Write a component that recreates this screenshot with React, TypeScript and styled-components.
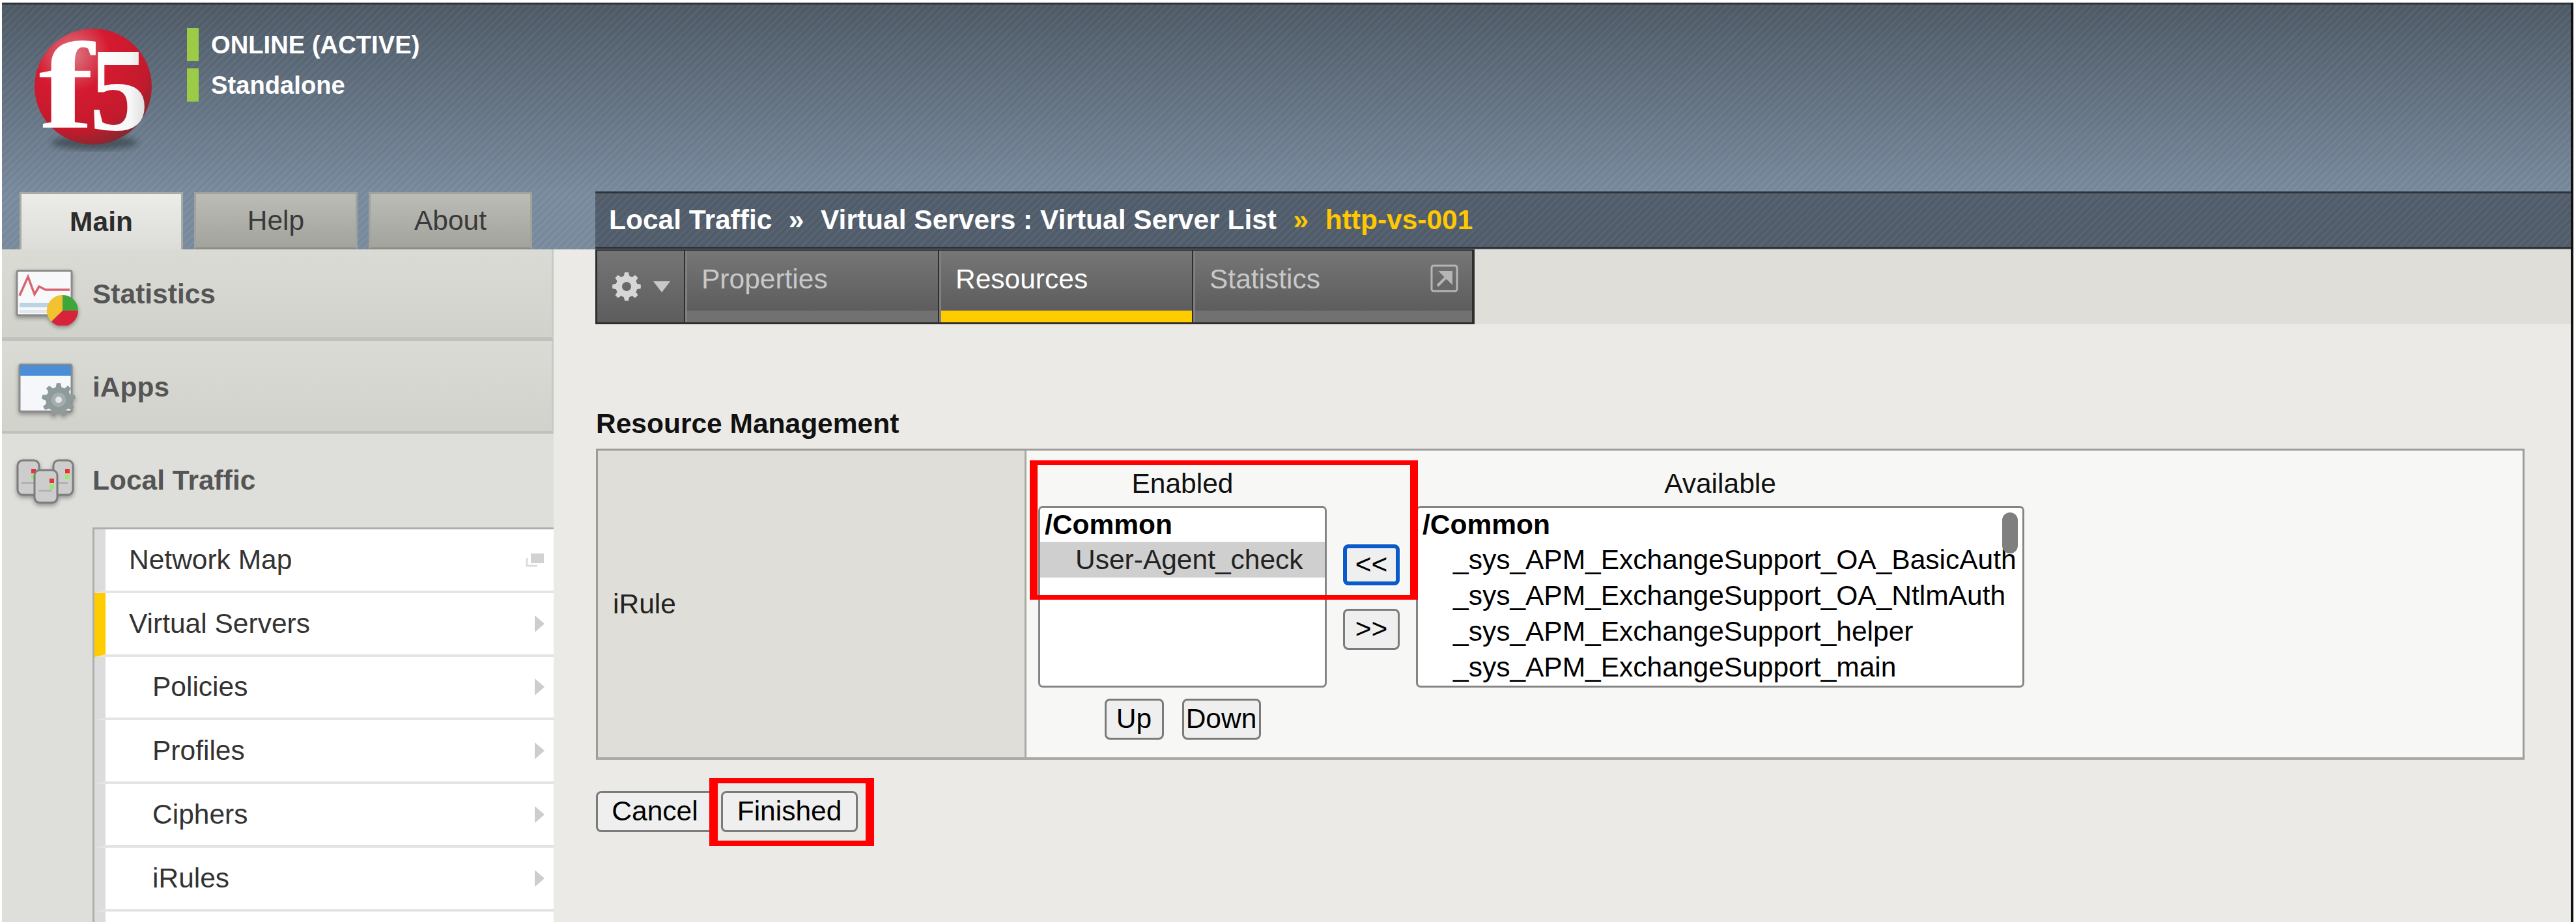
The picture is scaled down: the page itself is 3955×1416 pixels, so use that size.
import React from 'react'
import styled, { createGlobalStyle } from 'styled-components'

const GlobalStyle = createGlobalStyle`
  html, body {
    margin: 0;
    background: #fff;
    overflow: hidden;
  }
  body {
    font-family: "Liberation Sans", Arial, sans-serif;
    font-size: 42.5px;
    color: #000;
  }
  * {
    box-sizing: border-box;
  }
`

const stripes = `repeating-linear-gradient(135deg, rgba(255, 255, 255, 0.035) 0 3px, rgba(0, 0, 0, 0.02) 3px 8px)`

const Frame = styled.div`
  margin: 4px 0 0 3px;
  width: 3948px;
  height: 1412px;
  border-right: 4px solid #111;
  overflow: hidden;
  display: flex;
  flex-direction: column;
`

const Header = styled.header`
  height: 379px;
  flex: none;
  border-top: 3px solid #2f3337;
  background: ${stripes}, linear-gradient(180deg, #4f5b67 0%, #6a7a8b 50%, #7a8c9f 78%, #7a8c9f 100%);
  display: flex;
  flex-direction: column;
  justify-content: space-between;
`

const Brand = styled.div`
  display: flex;
  padding: 36px 0 0 50px;
`

const Logo = styled.svg`
  width: 180px;
  height: 192px;
  flex: none;
  overflow: visible;
  filter: blur(0.6px);
`

const StatusList = styled.div`
  margin-left: 54px;
  display: flex;
  flex-direction: column;
  gap: 11px;
`

const StatusLine = styled.div`
  height: 51px;
  border-left: 18px solid #9ccc47;
  padding-left: 19px;
  display: flex;
  align-items: center;
  font-size: 38.2px;
  font-weight: 700;
  color: #fff;
`

const HeaderBottom = styled.div`
  display: flex;
  align-items: flex-end;
  padding-left: 27px;
`

const TopTabs = styled.div`
  width: 884px;
  flex: none;
  display: flex;
  gap: 17px;
`

const TopTab = styled.div<{ $active?: boolean }>`
  width: 251px;
  height: 88px;
  display: flex;
  align-items: center;
  justify-content: center;
  border: 3px solid ${p => (p.$active ? '#a9a9a5' : '#a2a29d')};
  border-bottom: ${p => (p.$active ? 'none' : '3px solid #8c8c87')};
  background: ${p =>
    p.$active
      ? 'linear-gradient(180deg, #ecece8, #dcdcd8)'
      : 'linear-gradient(180deg, #bcbcb6, #a3a39d)'};
  font-weight: ${p => (p.$active ? 700 : 400)};
  color: ${p => (p.$active ? '#2c2c2c' : '#3a3a3a')};
`

const Breadcrumb = styled.div`
  flex: 1;
  height: 88px;
  margin-bottom: 1px;
  border-top: 3px solid #2f3337;
  border-bottom: 3px solid #2f3337;
  padding-left: 21px;
  display: flex;
  align-items: center;
  gap: 25.5px;
  background: ${stripes}, #525e6c;
  font-weight: 700;
  color: #fff;
`

const Crumb = styled.span<{ $current?: boolean }>`
  color: ${p => (p.$current ? '#ffc800' : '#fff')};
`

const Body = styled.div`
  flex: 1;
  min-height: 0;
  display: flex;
`

const Sidebar = styled.aside`
  width: 847px;
  flex: none;
  background: #dededa;
`

const Panel = styled.div<{ $h: number; $line: number }>`
  height: ${p => p.$h}px;
  border-bottom: ${p => p.$line}px solid #c0c0bc;
  border-right: 3px solid #c9c9c5;
  background: linear-gradient(180deg, #dbdbd6, #d2d2cd);
  padding: 3px 0 0 19px;
  display: flex;
  align-items: center;
`

const OpenPanel = styled(Panel)`
  border-bottom: none;
  border-right: none;
  padding-top: 0;
  background: #dededa;
`

const PanelIcon = styled.svg`
  width: 100px;
  height: 96px;
  margin-right: 20px;
  flex: none;
  filter: drop-shadow(0 3px 3px rgba(0, 0, 0, 0.35)) blur(0.5px);
`

const PanelLabel = styled.span`
  font-weight: 700;
  color: #555;
`

const Menu = styled.div`
  margin-left: 139px;
  border-top: 3px solid #aeaeaa;
  border-left: 3px solid #aeaeaa;
`

const MenuRow = styled.div<{ $current?: boolean; $sub?: boolean }>`
  height: 97.8px;
  display: flex;
  align-items: center;
  justify-content: space-between;
  padding: 0 14px 0 ${p => (p.$sub ? 72 : 36)}px;
  background: #fff;
  border-left: 17px solid ${p => (p.$current ? '#ffcc00' : '#dcdcdc')};
  border-bottom: 4px solid #e4e4e4;
  color: #333;
`

const RowArrow = styled.svg`
  width: 15px;
  height: 26px;
  flex: none;
`

const Main = styled.main`
  flex: 1;
  min-width: 0;
  background: #ebeae6;
`

const TabStrip = styled.div`
  height: 115px;
  margin-left: 64px;
  display: flex;
`

const TabBar = styled.div`
  display: flex;
  gap: 2px;
  padding: 2px 4px 3px 3px;
  background: #2e2e2e;
`

const TabFiller = styled.div`
  flex: 1;
  background: #dfded9;
`

const GearCell = styled.div`
  width: 133px;
  display: flex;
  align-items: center;
  justify-content: center;
  gap: 18px;
  background: linear-gradient(180deg, #757575, #5d5d5d);
`

const GearMenuIcon = styled.svg`
  width: 46px;
  height: 46px;
`

const CaretDown = styled.svg`
  width: 26px;
  height: 17px;
`

const TabCell = styled.div<{ $w: number }>`
  width: ${p => p.$w}px;
  display: flex;
  flex-direction: column;
  border-left: 3px solid #808080;
`

const TabFace = styled.div<{ $active?: boolean }>`
  flex: 1;
  display: flex;
  align-items: center;
  justify-content: space-between;
  padding: 0 21px 4px 22px;
  background: linear-gradient(180deg, #767676, #5d5d5d);
  color: ${p => (p.$active ? '#fff' : '#c8c8c8')};
`

const TabFoot = styled.div<{ $active?: boolean }>`
  height: 18px;
  background: ${p => (p.$active ? '#ffcc00' : '#717171')};
`

const ExportIcon = styled.svg`
  width: 43px;
  height: 43px;
  margin-top: -3px;
`

const Content = styled.div`
  padding: 129px 71px 0 65px;
`

const SectionTitle = styled.h2`
  margin: 0 0 14px;
  font-size: 42.5px;
  line-height: 48px;
  font-weight: 700;
  color: #111;
`

const ResourceTable = styled.div`
  height: 478px;
  display: flex;
  border: 3px solid #9c9c98;
  border-bottom: 4px solid #aaaaa6;
`

const LabelCell = styled.div`
  width: 658px;
  flex: none;
  display: flex;
  align-items: center;
  padding-left: 23px;
  background: #dfded9;
  border-right: 3px solid #a9a9a5;
  color: #222;
`

const ValueCell = styled.div`
  flex: 1;
  position: relative;
  display: flex;
  align-items: flex-start;
  padding: 27px 0 0 18px;
  background: #f7f7f5;
`

const ListColumn = styled.div<{ $w: number }>`
  width: ${p => p.$w}px;
  flex: none;
`

const ListCaption = styled.div`
  height: 58px;
  line-height: 48px;
  text-align: center;
  color: #111;
`

const ListBox = styled.div`
  position: relative;
  height: 279px;
  overflow: hidden;
  background: #fff;
  border: 3px solid #858585;
  border-radius: 7px;
`

const ListGroup = styled.div`
  height: 52px;
  line-height: 52px;
  padding-left: 7px;
  font-weight: 700;
`

const ListOption = styled.div<{ $selected?: boolean }>`
  height: 55px;
  line-height: 55px;
  padding-left: 54px;
  white-space: nowrap;
  background: ${p => (p.$selected ? '#cfcfcf' : 'transparent')};
  color: ${p => (p.$selected ? '#222' : '#000')};
`

const ScrollThumb = styled.div`
  position: absolute;
  top: 7px;
  right: 7px;
  width: 24px;
  height: 63px;
  border-radius: 12px;
  background: #7f7f7f;
`

const MoveColumn = styled.div`
  width: 137px;
  flex: none;
  padding: 117px 0 0 25px;
  display: flex;
  flex-direction: column;
  gap: 36px;
`

const OrderRow = styled.div`
  display: flex;
  justify-content: center;
  gap: 28px;
  margin-top: 17px;
`

const FormButton = styled.button<{ $focused?: boolean; $w: number }>`
  width: ${p => p.$w}px;
  height: 63px;
  padding: 0;
  font-family: inherit;
  font-size: 42.5px;
  line-height: 1;
  color: #000;
  background: #efefef;
  border: ${p => (p.$focused ? '6px solid #0a5bc9' : '3px solid #7b7b7b')};
  border-radius: 8px;
  box-shadow: ${p => (p.$focused ? '0 0 0 2px #fff' : 'none')};
`

const Actions = styled.div`
  margin-top: 48px;
  display: flex;
  gap: 11px;
`

const Annotated = styled.div`
  position: relative;
`

const RedBox = styled.div`
  position: absolute;
  top: -20px;
  left: -18px;
  right: -25px;
  bottom: -21px;
  border-style: solid;
  border-color: #fe0000;
  border-width: 8px 13px;
`

const EnabledRedBox = styled(RedBox)`
  top: 15px;
  left: 5px;
  right: auto;
  bottom: auto;
  width: 596px;
  height: 214px;
  border-width: 7px 12px;
`

// toothed wheel outline, used by the gear drawings
const gearPath = (cx: number, cy: number, r: number, teeth: number) => {
  const inner = r * 0.76
  const step = (Math.PI * 2) / teeth
  const pts: string[] = []
  for (let i = 0; i < teeth; i++) {
    const a = i * step - Math.PI / 2
    const corners: [number, number][] = [
      [a - step * 0.32, inner],
      [a - step * 0.17, r],
      [a + step * 0.17, r],
      [a + step * 0.32, inner],
    ]
    corners.forEach(([ang, rad]) => {
      pts.push(`${(cx + Math.cos(ang) * rad).toFixed(2)} ${(cy + Math.sin(ang) * rad).toFixed(2)}`)
    })
  }
  return `M${pts.join('L')}Z`
}

const F5Logo = () => (
  <Logo viewBox="0 0 180 192">
    <defs>
      <radialGradient id="eggFill" cx="32%" cy="22%" r="85%">
        <stop offset="0%" stopColor="#dc7a84" />
        <stop offset="38%" stopColor="#d51a30" />
        <stop offset="78%" stopColor="#c21a2c" />
        <stop offset="100%" stopColor="#7f2a30" />
      </radialGradient>
      <linearGradient id="fiveFill" x1="0" y1="0" x2="1" y2="0">
        <stop offset="0%" stopColor="#ffffff" />
        <stop offset="70%" stopColor="#f6f6f6" />
        <stop offset="100%" stopColor="#d8d8d8" />
      </linearGradient>
      <filter id="logoShadow">
        <feGaussianBlur stdDeviation="5" />
      </filter>
    </defs>
    <ellipse cx="92" cy="176" rx="66" ry="11" fill="#2b3036" opacity="0.55" filter="url(#logoShadow)" />
    <ellipse cx="90" cy="90" rx="90" ry="89" fill="url(#eggFill)" />
    <text
      transform="translate(6 153) scale(1.35 1)"
      fontFamily="'Liberation Serif', serif"
      fontWeight="700"
      fontSize="190"
      fill="#fff"
    >
      f
    </text>
    <text
      x="84"
      y="156"
      fontFamily="'Liberation Serif', serif"
      fontWeight="700"
      fontSize="183"
      fill="url(#fiveFill)"
    >
      5
    </text>
  </Logo>
)

const StatisticsIcon = () => (
  <PanelIcon viewBox="0 0 100 96">
    <rect x="4" y="12" width="84" height="68" rx="2" fill="#f7f8fa" stroke="#8b8b8b" strokeWidth="3" />
    <rect x="8" y="61" width="62" height="7" fill="#bcd3e6" />
    <rect x="8" y="72" width="62" height="5" fill="#dfe7ef" />
    <polyline points="8,50 21,21 31,48 38,36 48,41 85,41" fill="none" stroke="#d9636f" strokeWidth="3.5" />
    <path d="M74 73V49A24 24 0 0 0 57 90Z" fill="#f2c230" />
    <path d="M74 73V49A24 24 0 0 1 98 73Z" fill="#3fa63a" />
    <path d="M74 73H98A24 24 0 0 1 57 90Z" fill="#d8243a" />
  </PanelIcon>
)

const IAppsIcon = () => (
  <PanelIcon viewBox="0 0 100 96">
    <rect x="8" y="13" width="80" height="72" rx="2" fill="#f6f7fb" stroke="#8b8b8b" strokeWidth="3" />
    <rect x="9" y="14" width="78" height="16" fill="#4b8dd6" />
    <path d={gearPath(68, 67, 26, 9)} fill="#8f9a9b" />
    <circle cx="68" cy="67" r="11" fill="#a5aeae" />
    <circle cx="68" cy="67" r="5" fill="#e4e7e7" />
  </PanelIcon>
)

const ServerShape = ({ x, y, w, h }: { x: number; y: number; w: number; h: number }) => (
  <>
    <rect x={x} y={y} width={w} height={h} rx="8" fill="#cdcdcd" stroke="#7d7d7d" strokeWidth="3" />
    <rect x={x + w - 12} y={y + 13} width="7" height="7" fill="#e8323a" />
    <rect x={x + w - 12} y={y + 22} width="7" height="7" fill="#9be86e" />
    <rect x={x + 6} y={y + h - 20} width={w - 14} height="3" fill="#b2b2b2" />
  </>
)

const LocalTrafficIcon = () => (
  <PanelIcon viewBox="0 0 100 96">
    <ServerShape x={5} y={17} w={33} h={53} />
    <ServerShape x={60} y={17} w={30} h={53} />
    <ServerShape x={31} y={32} w={35} h={50} />
  </PanelIcon>
)

const NetworkMapIcon = () => (
  <svg width="29" height="22" viewBox="0 0 29 22">
    <path d="M2 8V20H18" fill="none" stroke="#dcdcdc" strokeWidth="3" />
    <rect x="8" y="1" width="20" height="15" fill="#d2d2d2" />
  </svg>
)

const Arrow = () => (
  <RowArrow viewBox="0 0 15 26">
    <polygon points="0,0 15,13 0,26" fill="#cdcdcd" />
  </RowArrow>
)

const subItems = ['Policies', 'Profiles', 'Ciphers', 'iRules']

const availableRules = [
  '_sys_APM_ExchangeSupport_OA_BasicAuth',
  '_sys_APM_ExchangeSupport_OA_NtlmAuth',
  '_sys_APM_ExchangeSupport_helper',
  '_sys_APM_ExchangeSupport_main',
]

const App = () => (
  <>
    <GlobalStyle />
    <Frame>
      <Header>
        <Brand>
          <F5Logo />
          <StatusList>
            <StatusLine>ONLINE (ACTIVE)</StatusLine>
            <StatusLine>Standalone</StatusLine>
          </StatusList>
        </Brand>
        <HeaderBottom>
          <TopTabs>
            <TopTab $active>Main</TopTab>
            <TopTab>Help</TopTab>
            <TopTab>About</TopTab>
          </TopTabs>
          <Breadcrumb>
            <Crumb>Local Traffic</Crumb>
            <Crumb>»</Crumb>
            <Crumb>Virtual Servers : Virtual Server List</Crumb>
            <Crumb $current>»</Crumb>
            <Crumb $current>http-vs-001</Crumb>
          </Breadcrumb>
        </HeaderBottom>
      </Header>
      <Body>
        <Sidebar>
          <Panel $h={141} $line={6}>
            <StatisticsIcon />
            <PanelLabel>Statistics</PanelLabel>
          </Panel>
          <Panel $h={142} $line={4}>
            <IAppsIcon />
            <PanelLabel>iApps</PanelLabel>
          </Panel>
          <OpenPanel $h={144} $line={0}>
            <LocalTrafficIcon />
            <PanelLabel>Local Traffic</PanelLabel>
          </OpenPanel>
          <Menu>
            <MenuRow>
              Network Map
              <NetworkMapIcon />
            </MenuRow>
            <MenuRow $current>
              Virtual Servers
              <Arrow />
            </MenuRow>
            {subItems.map(item => (
              <MenuRow $sub key={item}>
                {item}
                <Arrow />
              </MenuRow>
            ))}
            <MenuRow $sub />
          </Menu>
        </Sidebar>
        <Main>
          <TabStrip>
            <TabBar>
              <GearCell>
                <GearMenuIcon viewBox="0 0 46 46">
                  <path fillRule="evenodd" d={`${gearPath(23, 23, 22, 8)}M23 16a7 7 0 1 0 0.01 0Z`} fill="#d6d6d6" />
                </GearMenuIcon>
                <CaretDown viewBox="0 0 26 17">
                  <polygon points="0,0 26,0 13,17" fill="#c8c8c8" />
                </CaretDown>
              </GearCell>
              <TabCell $w={388}>
                <TabFace>Properties</TabFace>
                <TabFoot />
              </TabCell>
              <TabCell $w={388}>
                <TabFace $active>Resources</TabFace>
                <TabFoot $active />
              </TabCell>
              <TabCell $w={428}>
                <TabFace>
                  Statistics
                  <ExportIcon viewBox="0 0 43 43">
                    <rect x="2" y="2" width="39" height="39" rx="3" fill="none" stroke="#b5b5b5" strokeWidth="3" />
                    <path d="M11 33L28 16M17 12H32V27Z" fill="#b5b5b5" stroke="#b5b5b5" strokeWidth="4" />
                  </ExportIcon>
                </TabFace>
                <TabFoot />
              </TabCell>
            </TabBar>
            <TabFiller />
          </TabStrip>
          <Content>
            <SectionTitle>Resource Management</SectionTitle>
            <ResourceTable>
              <LabelCell>iRule</LabelCell>
              <ValueCell>
                <ListColumn $w={443}>
                  <ListCaption>Enabled</ListCaption>
                  <ListBox>
                    <ListGroup>/Common</ListGroup>
                    <ListOption $selected>User-Agent_check</ListOption>
                  </ListBox>
                  <OrderRow>
                    <FormButton $w={91}>Up</FormButton>
                    <FormButton $w={121}>Down</FormButton>
                  </OrderRow>
                </ListColumn>
                <MoveColumn>
                  <FormButton $w={87} $focused>
                    &lt;&lt;
                  </FormButton>
                  <FormButton $w={87}>&gt;&gt;</FormButton>
                </MoveColumn>
                <ListColumn $w={934}>
                  <ListCaption>Available</ListCaption>
                  <ListBox>
                    <ListGroup>/Common</ListGroup>
                    {availableRules.map(rule => (
                      <ListOption key={rule}>{rule}</ListOption>
                    ))}
                    <ScrollThumb />
                  </ListBox>
                </ListColumn>
                <EnabledRedBox />
              </ValueCell>
            </ResourceTable>
            <Actions>
              <FormButton $w={181}>Cancel</FormButton>
              <Annotated>
                <FormButton $w={210}>Finished</FormButton>
                <RedBox />
              </Annotated>
            </Actions>
          </Content>
        </Main>
      </Body>
    </Frame>
  </>
)

export default App
